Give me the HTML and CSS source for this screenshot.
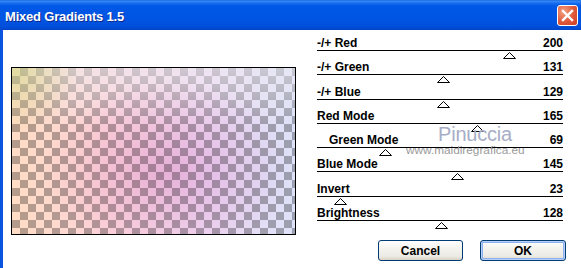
FILE: index.html
```html
<!DOCTYPE html>
<html>
<head>
<meta charset="utf-8">
<link rel="stylesheet" href="styles.css">
</head>
<body>
<div class="window">
  <div class="titlebar">
    <span class="title">Mixed Gradients 1.5</span>
    <div class="close">
      <svg width="13" height="13" viewBox="0 0 13 13"><path d="M2 2 L11 11 M11 2 L2 11" stroke="#fff" stroke-width="2.4" stroke-linecap="square"/></svg>
    </div>
  </div>
  <div class="body">
    <div class="preview"></div>
    <div class="panel">
      <div class="row"><div class="head"><span>-/+ Red</span><span>200</span></div><div class="track"><svg class="thumb" style="left:186px" viewBox="0 0 13 7"><polygon points="0.5,6.5 6.5,0.5 12.5,6.5"/></svg></div></div>
      <div class="row"><div class="head"><span>-/+ Green</span><span>131</span></div><div class="track"><svg class="thumb" style="left:120px" viewBox="0 0 13 7"><polygon points="0.5,6.5 6.5,0.5 12.5,6.5"/></svg></div></div>
      <div class="row"><div class="head"><span>-/+ Blue</span><span>129</span></div><div class="track"><svg class="thumb" style="left:120px" viewBox="0 0 13 7"><polygon points="0.5,6.5 6.5,0.5 12.5,6.5"/></svg></div></div>
      <div class="row"><div class="head"><span>Red Mode</span><span>165</span></div><div class="track"><svg class="thumb" style="left:154px" viewBox="0 0 13 7"><polygon points="0.5,6.5 6.5,0.5 12.5,6.5"/></svg></div></div>
      <div class="row"><div class="head"><span class="indent">Green Mode</span><span>69</span></div><div class="track"><svg class="thumb" style="left:62px" viewBox="0 0 13 7"><polygon points="0.5,6.5 6.5,0.5 12.5,6.5"/></svg></div></div>
      <div class="row"><div class="head"><span>Blue Mode</span><span>145</span></div><div class="track"><svg class="thumb" style="left:134px" viewBox="0 0 13 7"><polygon points="0.5,6.5 6.5,0.5 12.5,6.5"/></svg></div></div>
      <div class="row"><div class="head"><span>Invert</span><span>23</span></div><div class="track"><svg class="thumb" style="left:17px" viewBox="0 0 13 7"><polygon points="0.5,6.5 6.5,0.5 12.5,6.5"/></svg></div></div>
      <div class="row"><div class="head"><span>Brightness</span><span>128</span></div><div class="track"><svg class="thumb" style="left:118px" viewBox="0 0 13 7"><polygon points="0.5,6.5 6.5,0.5 12.5,6.5"/></svg></div></div>
      <div class="buttons">
        <button class="btn cancel">Cancel</button>
        <button class="btn ok">OK</button>
      </div>
    </div>
  </div>
  <div class="watermark">
    <div class="wm-name">Pinuccia</div>
    <div class="wm-url">www.maidiregrafica.eu</div>
  </div>
</div>
</body>
</html>
```
FILE: styles.css
```css
html, body {
  margin: 0;
  padding: 0;
  background: #fff;
}
.window {
  position: relative;
  width: 581px;
  height: 268px;
  overflow: hidden;
  font-family: "Liberation Sans", Arial, sans-serif;
}
.titlebar {
  height: 30px;
  display: flex;
  align-items: center;
  justify-content: space-between;
  padding: 0 3px 0 5px;
  box-sizing: border-box;
  background: linear-gradient(to bottom, #0a5fd6 0px, #3b8bf5 1px, #1a6ef0 3px, #0058e6 6px, #0055e3 18px, #0050dc 26px, #0046c8 30px);
}
.title {
  color: #fff;
  font-weight: bold;
  font-size: 13px;
  padding-top: 2px;
  letter-spacing: -0.2px;
  text-shadow: 1px 1px 0 #0a2a90;
}
.close {
  width: 19px;
  height: 19px;
  border: 1px solid #fff;
  border-radius: 3px;
  background: radial-gradient(circle at 30% 30%, #f2a080, #e0583a 55%, #c84020);
  display: flex;
  align-items: center;
  justify-content: center;
  margin-top: 1px;
}
.close svg { display: block; }
.body {
  display: flex;
  height: 238px;
  border-left: 3px solid #0a55e0;
  padding-left: 8px;
  gap: 21px;
}
.preview {
  margin-top: 37px;
  width: 285px;
  height: 168px;
  box-sizing: border-box;
  border: 1px solid #000;
  background-image:
    radial-gradient(circle at 0 0, #eaf4b8 0, rgba(234,244,184,0) 20%),
    radial-gradient(ellipse 45% 55% at 55% 62%, #f0d0ec 0, rgba(240,208,236,0) 100%),
    linear-gradient(to bottom, rgba(236,236,242,0.55) 0, rgba(255,255,255,0) 35%),
    linear-gradient(to right, #ffdcc4 0%, #fdd6dc 35%, #f0daf2 68%, #dde2f8 100%),
    conic-gradient(#b4b4b4 0 25%, #ffffff 0 50%, #b4b4b4 0 75%, #ffffff 0);
  background-size: 100% 100%, 100% 100%, 100% 100%, 100% 100%, 16px 16px;
  background-position: 0 0, 0 0, 0 0, 0 0, 0 0;
  background-blend-mode: multiply, multiply, normal, multiply, normal;
}
.panel {
  width: 249px;
  padding-top: 7px;
  display: flex;
  flex-direction: column;
}
.row {
  margin-right: 3px;
  height: 24.3px;
}
.head {
  display: flex;
  justify-content: space-between;
  font-weight: bold;
  font-size: 12px;
  line-height: 13px;
  color: #000;
  border-bottom: 1px solid #000;
}
.indent { padding-left: 12px; }
.track {
  position: relative;
  height: 10px;
}
.thumb {
  position: absolute;
  top: 1px;
  width: 13px;
  height: 7px;
  display: block;
}
.thumb polygon {
  fill: #fff;
  stroke: #000;
  stroke-width: 1;
}
.buttons {
  margin-top: 9px;
  display: flex;
  justify-content: flex-end;
  gap: 17px;
}
.btn {
  height: 21px;
  border: 1px solid #003c74;
  border-radius: 3px;
  background: linear-gradient(to bottom, #ffffff 0%, #f4f3ee 40%, #ecebe4 80%, #d8d2c6 100%);
  font-family: "Liberation Sans", Arial, sans-serif;
  font-weight: bold;
  font-size: 12px;
  color: #000;
  padding: 0;
  margin: 0;
}
.cancel { width: 85px; }
.ok {
  width: 86px;
  box-shadow: inset 0 0 0 1px #b8d0f8, inset 0 0 0 2px #8cb0f0;
}
.watermark {
  position: absolute;
  left: 406px;
  top: 124px;
  pointer-events: none;
}
.wm-name {
  margin-left: 32px;
  font-size: 20px;
  line-height: 20px;
  color: #a8adc6;
  letter-spacing: -0.2px;
}
.wm-url {
  margin-top: 0;
  font-size: 11.8px;
  line-height: 12px;
  color: #9a9a9a;
}
```
